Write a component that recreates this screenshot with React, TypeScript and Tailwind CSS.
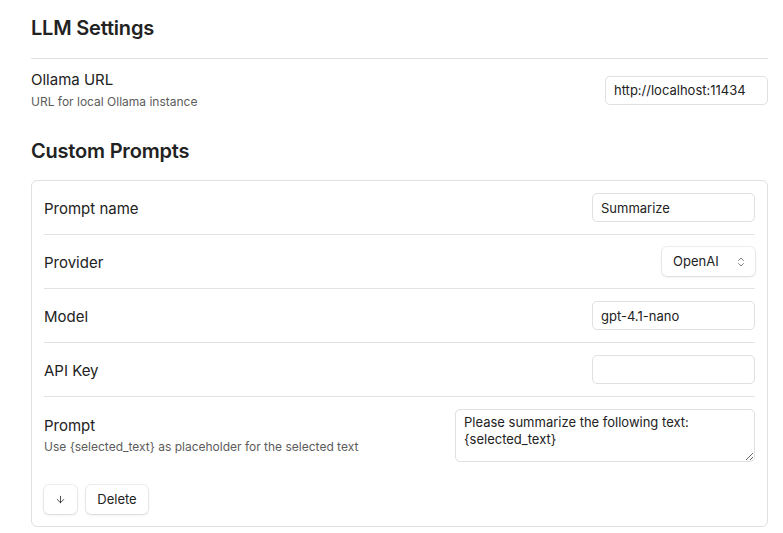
import { ArrowDown, ChevronsUpDown } from 'lucide-react'

const font = { fontFamily: 'Inter, "Noto Sans", sans-serif' }

function TextInput({ value }: { value: string }) {
  return (
    <input
      readOnly
      value={value}
      className="h-[29px] w-[163px] rounded-[5px] border border-[#e0e0e0] bg-white px-2 text-[13px] text-[#222] outline-none"
    />
  )
}

function Row({ label, desc, children, first }: { label: string; desc?: string; children: React.ReactNode; first?: boolean }) {
  return (
    <div className={`flex items-center justify-between py-3 ${first ? '' : 'border-t border-[#e3e3e3]'}`}>
      <div className={desc ? '' : 'pt-[2px]'}>
        <div className="text-[15px] leading-5 text-[#222]">{label}</div>
        {desc && <div className="mt-[3px] text-[12px] leading-4 text-[#5c5c5c]">{desc}</div>}
      </div>
      {children}
    </div>
  )
}

export default function App() {
  return (
    <div className="min-h-[533px] bg-white pl-[31px] pr-[15px] pt-[16px]" style={font}>
      <h2 className="border-b border-[#e0e0e0] pb-[18px] text-[20px] font-semibold leading-6 tracking-[-0.2px] text-[#222]">
        LLM Settings
      </h2>

      <div className="flex items-center justify-between pt-[11px]">
        <div>
          <div className="text-[15px] leading-5 text-[#222]">Ollama URL</div>
          <div className="mt-[4px] text-[12px] leading-4 text-[#5c5c5c]">URL for local Ollama instance</div>
        </div>
        <TextInput value="http://localhost:11434" />
      </div>

      <h2 className="mt-[29px] text-[20px] font-semibold leading-6 tracking-[-0.2px] text-[#222]">Custom Prompts</h2>

      <div className="mt-[17px] rounded-[6px] border border-[#e0e0e0] px-3">
        <Row label="Prompt name" first>
          <TextInput value="Summarize" />
        </Row>
        <Row label="Provider">
          <div className="flex h-[29px] w-[93px] items-center justify-between rounded-[5px] bg-white pl-[11px] pr-[8px] text-[13px] text-[#222] shadow-[0_0_0_1px_rgba(0,0,0,0.06),0_1px_3px_rgba(0,0,0,0.1)]">
            <span>OpenAI</span>
            <ChevronsUpDown size={12} strokeWidth={1.5} className="text-[#555]" />
          </div>
        </Row>
        <Row label="Model">
          <TextInput value="gpt-4.1-nano" />
        </Row>
        <Row label="API Key">
          <TextInput value="" />
        </Row>
        <Row label="Prompt" desc="Use {selected_text} as placeholder for the selected text">
          <textarea
            readOnly
            value={'Please summarize the following text:\n{selected_text}'}
            className="h-[53px] w-[300px] rounded-[5px] border border-[#e0e0e0] bg-white px-[8px] py-[4px] text-[13px] leading-[17px] text-[#222] outline-none"
          />
        </Row>
        <div className="flex gap-[9px] pb-[12px] pt-[11px]">
          <button className="flex h-[29px] w-[33px] items-center justify-center rounded-[5px] bg-white text-[#222] shadow-[0_0_0_1px_rgba(0,0,0,0.06),0_1px_3px_rgba(0,0,0,0.1)]">
            <ArrowDown size={11} strokeWidth={1.75} />
          </button>
          <button className="h-[29px] w-[62px] rounded-[5px] bg-white text-[13px] text-[#222] shadow-[0_0_0_1px_rgba(0,0,0,0.06),0_1px_3px_rgba(0,0,0,0.1)]">
            Delete
          </button>
        </div>
      </div>
    </div>
  )
}
